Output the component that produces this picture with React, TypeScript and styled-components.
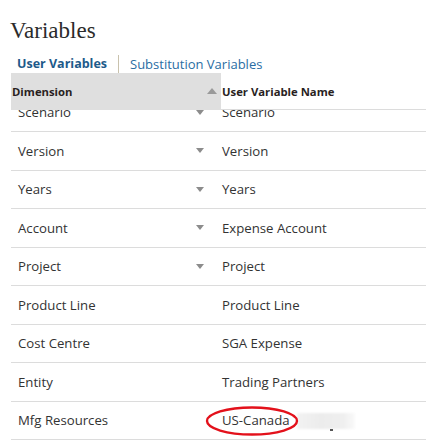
import * as React from "react";
import styled, {createGlobalStyle} from "styled-components";

interface VariableRow {
    dimension: string;
    name: string;
    hasMenu: boolean;
}

const rows: VariableRow[] = [
    {dimension: "Scenario", name: "Scenario", hasMenu: true},
    {dimension: "Version", name: "Version", hasMenu: true},
    {dimension: "Years", name: "Years", hasMenu: true},
    {dimension: "Account", name: "Expense Account", hasMenu: true},
    {dimension: "Project", name: "Project", hasMenu: true},
    {dimension: "Product Line", name: "Product Line", hasMenu: false},
    {dimension: "Cost Centre", name: "SGA Expense", hasMenu: false},
    {dimension: "Entity", name: "Trading Partners", hasMenu: false},
    {dimension: "Mfg Resources", name: "US-Canada", hasMenu: false},
];

const GlobalStyle = createGlobalStyle`
    html, body {
        margin: 0;
        padding: 0;
        background: #ffffff;
    }
    body {
        font-family: "Open Sans", "Noto Sans", sans-serif;
        color: #333333;
    }
`;

const Page = styled.div`
    width: 426px;
    height: 446px;
    overflow: hidden;
    padding-top: 17px;
    box-sizing: border-box;
`;

const Title = styled.h1`
    margin: 0 0 0 10px;
    font-family: "Liberation Serif", serif;
    font-weight: normal;
    font-size: 23px;
    line-height: 28px;
    color: #2b2b2b;
`;

const Tabs = styled.div`
    display: flex;
    align-items: center;
    margin: 10px 0 0 17px;
    height: 18px;
`;

const Tab = styled.span<{$active?: boolean}>`
    font-size: ${p => (p.$active ? "12.5px" : "13px")};
    font-weight: ${p => (p.$active ? 700 : 400)};
    color: ${p => (p.$active ? "#1d5a8a" : "#2a6da3")};
    line-height: 18px;
`;

const TabDivider = styled.span`
    width: 1px;
    height: 19px;
    background: #c9c2ad;
    margin: 0 11px 0 11px;
`;

const Table = styled.div`
    margin: 0 0 0 11px;
`;

const HeaderRow = styled.div`
    display: grid;
    grid-template-columns: 210px 1fr;
    height: 37px;
    position: relative;
    z-index: 1;
`;

const HeaderCell = styled.div<{$hovered?: boolean}>`
    display: flex;
    align-items: center;
    justify-content: space-between;
    background: ${p => (p.$hovered ? "#dfdfdf" : "#ffffff")};
    border-bottom: ${p => (p.$hovered ? "none" : "1px solid #dcdcdc")};
    box-sizing: border-box;
    padding-left: 1px;
    padding-right: 4px;
    font-size: 11.3px;
    font-weight: 700;
    color: #2a1f1f;
`;

const SortArrow = styled.span`
    width: 0;
    height: 0;
    border-left: 5px solid transparent;
    border-right: 5px solid transparent;
    border-bottom: 6px solid #9a9a9a;
    margin-top: -1px;
`;

const Body = styled.div`
    overflow: hidden;
    height: 336px;
`;

const BodyInner = styled.div`
    margin-top: -16.5px;
`;

const Row = styled.div`
    display: grid;
    grid-template-columns: 210px 1fr;
    height: 38.5px;
    border-bottom: 1px solid #dcdcdc;
    box-sizing: border-box;
`;

const Cell = styled.div<{$indent: number}>`
    display: flex;
    align-items: center;
    justify-content: space-between;
    padding-left: ${p => p.$indent}px;
    padding-right: 17px;
    font-size: 13.2px;
    color: #333333;
    position: relative;
`;

const MenuArrow = styled.span`
    width: 0;
    height: 0;
    border-left: 4px solid transparent;
    border-right: 4px solid transparent;
    border-top: 5px solid #8c8c8c;
`;

const Highlight = styled.svg`
    position: absolute;
    left: -15px;
    top: 4px;
    overflow: visible;
`;

const Redacted = styled.span`
    position: absolute;
    left: 76px;
    top: 11px;
    width: 58px;
    height: 16px;
    background: linear-gradient(90deg, #f2f2f2 0%, #ececec 40%, #efefef 80%, #fafafa 100%);
    filter: blur(1px);
`;

const Speck = styled.span`
    position: absolute;
    left: 109px;
    top: 27px;
    width: 3px;
    height: 2px;
    background: #555;
`;

export default function App() {
    return (
        <Page>
            <GlobalStyle />
            <Title>Variables</Title>
            <Tabs>
                <Tab $active>User Variables</Tab>
                <TabDivider />
                <Tab>Substitution Variables</Tab>
            </Tabs>
            <Table>
                <HeaderRow>
                    <HeaderCell $hovered>
                        Dimension
                        <SortArrow />
                    </HeaderCell>
                    <HeaderCell>User Variable Name</HeaderCell>
                </HeaderRow>
                <Body>
                    <BodyInner>
                        {rows.map((row, i) => (
                            <Row key={row.dimension}>
                                <Cell $indent={7}>
                                    {row.dimension}
                                    {row.hasMenu && <MenuArrow />}
                                </Cell>
                                <Cell $indent={1}>
                                    {row.name}
                                    {i === rows.length - 1 && (
                                        <>
                                            <Redacted />
                                            <Speck />
                                            <Highlight width="92" height="30" viewBox="0 0 92 30">
                                                <ellipse cx="46" cy="15" rx="45" ry="13.5" fill="none" stroke="#e3111b" strokeWidth="2.4" />
                                            </Highlight>
                                        </>
                                    )}
                                </Cell>
                            </Row>
                        ))}
                    </BodyInner>
                </Body>
            </Table>
        </Page>
    );
}
